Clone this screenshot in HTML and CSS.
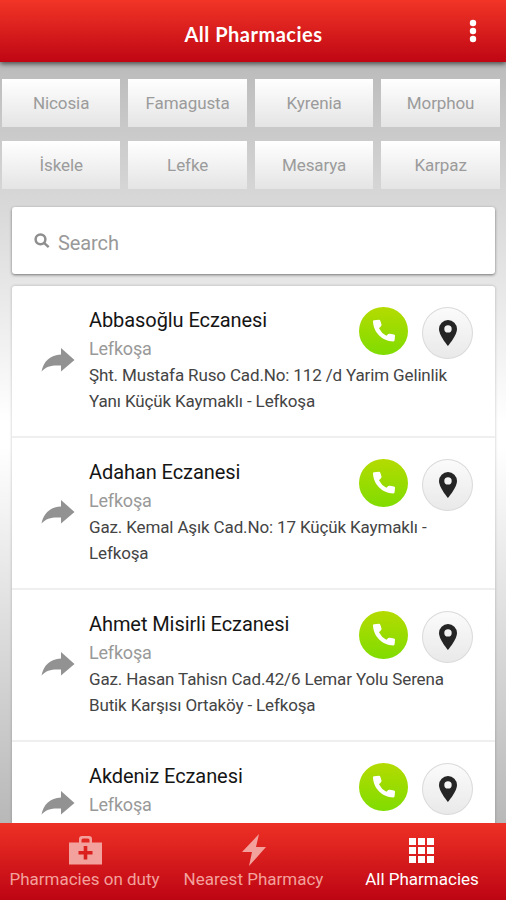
FILE: index.html
```html
<!DOCTYPE html>
<html lang="en">
<head>
<meta charset="utf-8">
<title>All Pharmacies</title>
<link rel="stylesheet" href="styles.css">
</head>
<body>
<svg width="0" height="0" class="defs">
  <symbol id="share" viewBox="0 0 34 24"><path d="M20 0 33.500 12 20 23.500V17.500C11 17 5.500 18 .5 23.500 2.500 13.500 9 7 20 6.500Z"/></symbol>
  <symbol id="phone" viewBox="0 0 24 24"><path d="M2 1.200 7 .8Q8 .8 8.300 1.800L9.500 5.600Q9.700 6.500 9 7.200L7 9.200Q9.500 14.200 14.300 16.800L16.300 15Q17 14.500 17.900 14.700L22 15.400Q23 15.700 23 16.800L22.600 21.300Q22.500 22.400 21.400 22.400C10.500 22.400 1.300 13.500 1 2.300Q1 1.300 2 1.200Z"/></symbol>
  <symbol id="pin" viewBox="0 0 18 26"><path fill-rule="evenodd" d="M9 0A9 9 0 0 1 18 9C18 15.500 9 26 9 26S0 15.500 0 9A9 9 0 0 1 9 0ZM9 5.200A3.700 3.700 0 1 0 9 12.600 3.700 3.700 0 0 0 9 5.200Z"/></symbol>
</svg>
<div class="app">
  <header class="topbar">
    <h1 class="title">All Pharmacies</h1>
    <svg class="more" viewBox="0 0 8 24"><circle cx="4" cy="4" r="3.200"/><circle cx="4" cy="12" r="3.200"/><circle cx="4" cy="20" r="3.200"/></svg>
  </header>
  <main class="content">
    <nav class="cities">
      <a class="city">Nicosia</a><a class="city">Famagusta</a><a class="city">Kyrenia</a><a class="city">Morphou</a>
      <a class="city">İskele</a><a class="city">Lefke</a><a class="city">Mesarya</a><a class="city">Karpaz</a>
    </nav>
    <div class="search">
      <svg class="lens" viewBox="0 0 16 16"><circle cx="6.500" cy="6.300" r="4.900"/><path d="M10 9.800 14.700 14.200"/></svg>
      <span>Search</span>
    </div>
    <section class="list">
      <article class="item">
        <svg class="share"><use href="#share"/></svg>
        <div class="info"><h2 class="name">Abbasoğlu Eczanesi</h2><p class="town">Lefkoşa</p><p class="addr">Şht. Mustafa Ruso Cad.No: 112 /d Yarim Gelinlik<br>Yanı Küçük Kaymaklı - Lefkoşa</p></div>
        <div class="actions"><span class="call"><svg><use href="#phone"/></svg></span><span class="map"><svg><use href="#pin"/></svg></span></div>
      </article>
      <article class="item">
        <svg class="share"><use href="#share"/></svg>
        <div class="info"><h2 class="name">Adahan Eczanesi</h2><p class="town">Lefkoşa</p><p class="addr">Gaz. Kemal Aşık Cad.No: 17 Küçük Kaymaklı -<br>Lefkoşa</p></div>
        <div class="actions"><span class="call"><svg><use href="#phone"/></svg></span><span class="map"><svg><use href="#pin"/></svg></span></div>
      </article>
      <article class="item">
        <svg class="share"><use href="#share"/></svg>
        <div class="info"><h2 class="name">Ahmet Misirli Eczanesi</h2><p class="town">Lefkoşa</p><p class="addr">Gaz. Hasan Tahisn Cad.42/6 Lemar Yolu Serena<br>Butik Karşısı Ortaköy - Lefkoşa</p></div>
        <div class="actions"><span class="call"><svg><use href="#phone"/></svg></span><span class="map"><svg><use href="#pin"/></svg></span></div>
      </article>
      <article class="item short">
        <svg class="share"><use href="#share"/></svg>
        <div class="info"><h2 class="name">Akdeniz Eczanesi</h2><p class="town">Lefkoşa</p></div>
        <div class="actions"><span class="call"><svg><use href="#phone"/></svg></span><span class="map"><svg><use href="#pin"/></svg></span></div>
      </article>
    </section>
  </main>
  <footer class="tabs">
    <a class="tab duty"><svg viewBox="0 0 34 30"><path fill-rule="evenodd" d="M1 7.500H11V4Q11 1 14 1H21Q24 1 24 4V7.500H34V29.500H1ZM13.500 7.500H21.500V5Q21.500 3.500 20 3.500H15Q13.500 3.500 13.500 5ZM15.700 11V16H10.500V19.500H15.700V24.500H19.300V19.500H24.500V16H19.300V11Z"/></svg><span>Pharmacies on duty</span></a>
    <a class="tab near"><svg viewBox="0 0 34 34"><path d="M22 1 5 19H15L12 33 29 14H19Z"/></svg><span>Nearest Pharmacy</span></a>
    <a class="tab all"><svg viewBox="0 0 26 26"><path d="M0 0h7v7H0zM9 0h7v7H9zM18 0h7v7h-7zM0 9h7v7H0zM9 9h7v7H9zM18 9h7v7h-7zM0 18h7v7H0zM9 18h7v7H9zM18 18h7v7h-7z"/></svg><span>All Pharmacies</span></a>
  </footer>
</div>
</body>
</html>
```
FILE: styles.css
```css
* { box-sizing: border-box; }
body { margin: 0; font-family: Roboto, "Liberation Sans", sans-serif; }
h1, h2, p { margin: 0; font-weight: 400; }
.defs { position: absolute; }
.app { width: 506px; height: 900px; display: flex; flex-direction: column; overflow: hidden; }
.topbar { height: 62px; flex: none; display: grid; grid-template-columns: 1fr auto; align-items: center; background: linear-gradient(#f23527, #bf0613); box-shadow: 0 2px 5px rgba(0,0,0,.6); z-index: 1; padding: 6px 29px 0 38px; }
.title { color: #fff; text-align: center; font: 700 20px/26px Lato, sans-serif; letter-spacing: .5px; }
.more { width: 8px; height: 24px; fill: #fff; margin-bottom: 6px; }
.content { flex: 1; min-height: 0; overflow: hidden; background: linear-gradient(#bbb 0, #d6d6d6 130px, #fff 360px, #fff 385px, #b8b8b8 100%); }
.cities { padding: 17px 6px 0 2px; display: grid; grid-template-columns: repeat(4, 118.300px); column-gap: 8.200px; row-gap: 14px; }
.city { height: 48px; display: flex; align-items: center; justify-content: center; background: linear-gradient(#fff, #e4e4e4); color: #9b9b9b; font-size: 17px; letter-spacing: -.1px; }
.search { margin: 18px 11px 0 12px; height: 67px; border-radius: 3px; background: #fff; box-shadow: 0 1px 3px rgba(0,0,0,.5); display: flex; align-items: center; gap: 8px; padding: 4px 0 0 22px; color: #999; font-size: 20px; letter-spacing: -.1px; }
.lens { width: 16px; height: 16px; fill: none; stroke: #8f8f8f; stroke-width: 2.500; margin-bottom: 3px; }
.list { margin: 12px 11px 0 12px; background: #fff; border-radius: 3px; box-shadow: 0 0 3px rgba(0,0,0,.25); }
.item { height: 152px; display: grid; grid-template-columns: 77px 1fr; border-bottom: 2px solid #efefef; position: relative; }
.share { width: 34px; height: 24px; fill: #929292; margin: 62px 0 0 28.500px; }
.short .share { margin-top: 49px; }
.info { padding-top: 20px; white-space: nowrap; }
.name { font-size: 20px; line-height: 28px; color: #151515; letter-spacing: -.08px; }
.town { font-size: 18px; line-height: 29px; color: #999; letter-spacing: -.2px; }
.addr { font-size: 17px; line-height: 25.500px; color: #444; letter-spacing: -.14px; }
.actions { position: absolute; right: 22px; top: 21px; display: flex; gap: 14px; }
.call, .map { border-radius: 50%; display: flex; align-items: center; justify-content: center; }
.call { width: 49px; height: 48px; background: linear-gradient(#b4db00, #80dc00); }
.call svg { width: 24px; height: 24px; fill: #fff; }
.map { width: 51px; height: 52px; border: 1px solid #dadada; background: linear-gradient(#fbfbfb, #e9e9e9); }
.map svg { width: 18px; height: 26px; fill: #252525; }
.tabs { height: 77px; flex: none; display: grid; grid-template-columns: 169px 169px 168px; background: linear-gradient(#ee3125, #bd0413); z-index: 1; }
.tab { display: flex; flex-direction: column; align-items: center; color: #f3a19c; fill: #f3a19c; font-size: 17px; white-space: nowrap; }
.tab svg { width: 34px; height: 30px; margin-top: 12px; }
.tab span { line-height: 24px; margin-top: 2px; }
.near svg { height: 34px; margin: 10px 0 0; }
.near span { margin-top: 0; }
.all { color: #fff; fill: #fff; }
.all svg { width: 26px; height: 26px; margin: 15px 0 1px; }
```
